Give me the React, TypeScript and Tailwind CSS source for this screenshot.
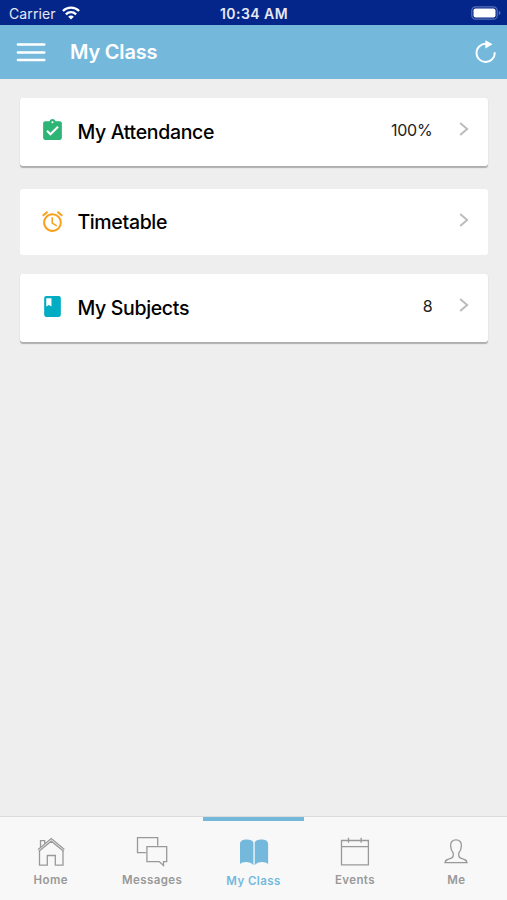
import type { ReactNode } from "react";
import { MdAlarm, MdAssignmentTurnedIn, MdClass } from "react-icons/md";

interface ClassItem {
  id: string;
  label: string;
  value?: string;
  icon: ReactNode;
  cardClass: string;
}

interface Tab {
  id: string;
  label: string;
  icon: ReactNode;
}

const RAISED = "shadow-[0_1.5px_1px_rgba(0,0,0,0.27)]";

const ITEMS: ClassItem[] = [
  {
    id: "attendance",
    label: "My Attendance",
    value: "100%",
    icon: <MdAssignmentTurnedIn className="size-[25px] text-[#2db576]" />,
    cardClass: `h-[68px] ${RAISED}`,
  },
  {
    id: "timetable",
    label: "Timetable",
    icon: <MdAlarm className="size-[25px] text-[#f9a01f]" />,
    cardClass: "mt-[23px] h-[66px] pt-px",
  },
  {
    id: "subjects",
    label: "My Subjects",
    value: "8",
    icon: <MdClass className="size-[25px] text-[#02acc3]" />,
    cardClass: `mt-[19px] h-[68px] ${RAISED}`,
  },
];

const TABS: Tab[] = [
  {
    id: "home",
    label: "Home",
    icon: (
      <>
        <path d="M5.500 13.500v14.700h7.800v-9.700h8v9.700H29V13.500" />
        <path d="M4.100 12.400 17.300 1.600l13.100 10.800M4.900 14.200l12.400-10 12.300 10M6.500 9.800V3.600h4.200v3" />
      </>
    ),
  },
  {
    id: "messages",
    label: "Messages",
    icon: (
      <>
        <path d="M10.900 15.600H2.500V.7h20.200v8" />
        <path d="M11.900 9.600h19.800v15h-3.200v4l-4.300-4H11.900z" />
      </>
    ),
  },
  {
    id: "class",
    label: "My Class",
    icon: (
      <path
        d="M16.400 28.200V5.400c-1-2.200-3.200-3-6.400-3-4.300 0-7 1.500-7 4.300v20.200c2.500-2.400 10-3.200 13.400 1.300zM17.700 28.200V5.400c1-2.200 3.200-3 6.400-3 4.300 0 7 1.500 7 4.300v20.200c-2.500-2.400-10-3.200-13.400 1.300z"
        fill="currentColor"
        stroke="none"
      />
    ),
  },
  {
    id: "events",
    label: "Events",
    icon: <path d="M3.500 3.500h26.900v24.300H3.500zM3.500 9.600h26.900M10.500.8v5M23.100.8v5" />,
  },
  {
    id: "me",
    label: "Me",
    icon: (
      <path d="M17 2.900c-3.600 0-5.600 2.400-5.400 6 .2 3.200 1.100 5.400 2.600 7.100.5 3.100-.3 4.600-2.400 5.300-3.600 1.100-5.400 1.600-5.800 4.300h22c-.4-2.700-2.200-3.200-5.800-4.300-2.100-.7-2.900-2.200-2.400-5.300 1.500-1.700 2.400-3.900 2.600-7.100.2-3.600-1.800-6-5.400-6z" />
    ),
  },
];

function StatusBar() {
  return (
    <div className="flex h-[25px] items-center bg-[#04258a] pt-[2px] text-[14px] leading-none text-white">
      <div className="flex flex-1 items-center pl-[9px]">
        <span className="tracking-[0.1px] text-white/90">Carrier</span>
        <svg className="mb-px ml-[6px] h-[14px] w-[18px]" viewBox="0 0 18 14" fill="none" stroke="currentColor" strokeWidth="2.300">
          <path d="M.9 5C5.400.6 12.600.6 17.100 5" />
          <path d="M3.900 8.300c2.900-2.800 7.300-2.800 10.200 0" />
          <path d="M9 13.600 6.200 10.700c1.600-1.500 4-1.500 5.600 0z" fill="currentColor" stroke="none" />
        </svg>
      </div>
      <span className="mr-[2px] font-semibold tracking-[0.45px] text-white/90">10:34 AM</span>
      <div className="flex flex-1 justify-end pr-[6px] pb-[2px]">
        <svg className="h-[14px] w-[30px]" viewBox="0 0 30 14">
          <rect x=".8" y=".8" width="25.400" height="12.400" rx="3.800" fill="none" stroke="#5870b5" strokeWidth="1.200" />
          <rect x="2.500" y="2.500" width="22" height="9" rx="2" fill="#fff" />
          <path d="M27.800 4.800c2.200.8 2.200 3.600 0 4.400z" fill="#5870b5" />
        </svg>
      </div>
    </div>
  );
}

function Header() {
  return (
    <header className="flex h-[54px] items-center bg-[#74b9dc] text-white">
      <button className="ml-[16px]" aria-label="Menu">
        <svg className="h-[20px] w-[30px]" viewBox="0 0 30 20" stroke="currentColor" strokeWidth="2.300" strokeLinecap="round">
          <path d="M1.800 2.500h26.600M1.800 10.500h26.600M1.800 18h26.600" />
        </svg>
      </button>
      <h1 className="ml-6 flex-1 text-[20px] leading-none font-semibold tracking-[-0.2px]">My Class</h1>
      <button className="mr-[10px]" aria-label="Refresh">
        <svg className="h-[24px] w-[24px]" viewBox="0 0 24 24" fill="none" stroke="currentColor" strokeWidth="1.900">
          <path d="M13.200 3.800A9.100 9.100 0 1 0 21.700 12.200" />
          <path d="M12.400.3v8.200l7.200-4.200z" fill="currentColor" stroke="none" />
        </svg>
      </button>
    </header>
  );
}

function ClassCard({ item }: { item: ClassItem }) {
  return (
    <div className={`flex items-center rounded-[3px] bg-white px-[19.5px] ${item.cardClass}`}>
      <div className="mb-[3px]">{item.icon}</div>
      <span className="ml-[12.5px] flex-1 pt-px text-[19.5px] leading-none font-medium tracking-[-0.33px] text-black">
        {item.label}
      </span>
      <span className="mr-[26px] mb-[4px] text-[16px] leading-none tracking-[-0.2px] text-[#222]">{item.value}</span>
      <svg className="mb-[6px] h-[14px] w-[10px]" viewBox="0 0 10 14" fill="none" stroke="#bcbcc0" strokeWidth="2">
        <path d="m1.200 1 6.900 6-6.900 6" />
      </svg>
    </div>
  );
}

function TabBar({ active }: { active: string }) {
  return (
    <nav className="flex h-[84px] border-t border-[#dcdcdc] bg-[#f8f8f8]">
      {TABS.map((tab) => {
        const isActive = tab.id === active;
        return (
          <button
            key={tab.id}
            className={`flex flex-1 flex-col items-center ${
              isActive ? "border-t-4 border-[#74b9dc] pt-[16px] text-[#74b9dc]" : "pt-[20px] text-[#999]"
            }`}
          >
            <svg className="h-[32px] w-[34px]" viewBox="0 0 34 32" fill="none" stroke="currentColor" strokeWidth="1.300">
              {tab.icon}
            </svg>
            <span
              className={`text-[11.5px] leading-[14px] font-semibold tracking-[0.4px] ${isActive ? "mt-[5px]" : "mt-[4px]"}`}
            >
              {tab.label}
            </span>
          </button>
        );
      })}
    </nav>
  );
}

export default function App() {
  return (
    <div className="flex h-[900px] w-[507px] flex-col overflow-hidden bg-[#eeeeee] font-['Inter','Liberation_Sans',sans-serif]">
      <StatusBar />
      <Header />
      <main className="flex-1 pt-[19px] pr-[19px] pl-[20.4px]">
        {ITEMS.map((item) => (
          <ClassCard key={item.id} item={item} />
        ))}
      </main>
      <TabBar active="class" />
    </div>
  );
}
